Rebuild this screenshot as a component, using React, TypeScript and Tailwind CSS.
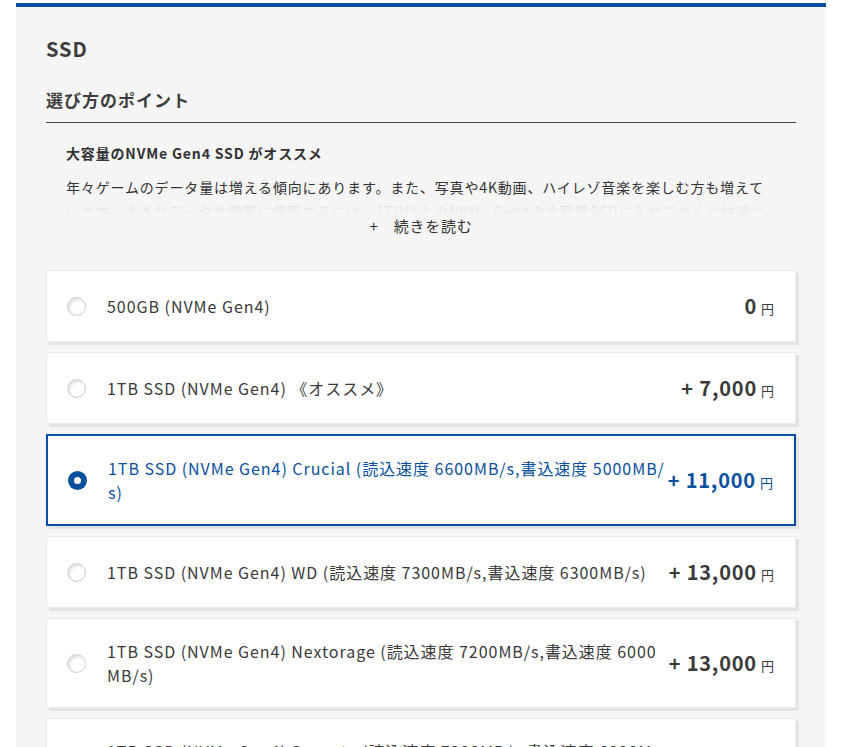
import { useState } from 'react';

interface Option {
    label: string;
    price: number;
}

const options: Option[] = [
    { label: '500GB (NVMe Gen4)', price: 0 },
    { label: '1TB SSD (NVMe Gen4) 《オススメ》', price: 7000 },
    { label: '1TB SSD (NVMe Gen4) Crucial (読込速度 6600MB/s,書込速度 5000MB/s)', price: 11000 },
    { label: '1TB SSD (NVMe Gen4) WD (読込速度 7300MB/s,書込速度 6300MB/s)', price: 13000 },
    { label: '1TB SSD (NVMe Gen4) Nextorage (読込速度 7200MB/s,書込速度 6000MB/s)', price: 13000 },
    { label: '1TB SSD (NVMe Gen4) Seagate (読込速度 7300MB/s,書込速度 6000MB/s)', price: 14000 },
];

function Radio({ checked }: { checked: boolean }) {
    if (checked) {
        return (
            <span className="w-[19px] h-[19px] rounded-full bg-[#0a4f9e] flex items-center justify-center shrink-0">
                <span className="w-[7px] h-[7px] rounded-full bg-white" />
            </span>
        );
    }
    return (
        <span className="w-[19px] h-[19px] rounded-full border border-[#cfcfcf] bg-white shadow-[inset_2px_2px_3px_rgba(0,0,0,0.12)] shrink-0" />
    );
}

export default function App() {
    const [selected, setSelected] = useState(2);

    return (
        <div className="min-h-screen bg-white pt-[3px] overflow-hidden" style={{ fontFamily: '"Noto Sans CJK JP", "Noto Sans", sans-serif' }}>
            <div className="ml-4 w-[810px] bg-[#f5f5f5] border-t-4 border-[#0a4f9e] px-[30px] pb-10">
                <h2 className="pt-[28px] text-[20px] leading-[28px] font-bold text-[#3d3d3d] tracking-[0.05em]">SSD</h2>

                <h3 className="mt-[24px] text-[17px] leading-[26px] font-bold text-[#3d3d3d] tracking-[0.06em] pb-[9px] border-b border-[#444]">選び方のポイント</h3>

                <div className="px-5">
                    <p className="mt-[18px] text-[14px] leading-[24px] font-bold text-[#333] tracking-[0.06em]">大容量のNVMe Gen4 SSD がオススメ</p>
                    <div className="relative mt-[10px] h-[41px] overflow-hidden">
                        <p className="text-[14px] leading-[24px] text-[#333] tracking-[0.06em]">
                            年々ゲームのデータ量は増える傾向にあります。また、写真や4K動画、ハイレゾ音楽を楽しむ方も増えています。大きなデータを頻繁に使用するには、1TB以上のNVMe Gen4の大容量SSDに入れておくと快適に使用できます。
                        </p>
                        <div className="absolute inset-x-0 top-[22px] bottom-0 bg-gradient-to-b from-[#f5f5f5]/80 to-[#f5f5f5]" />
                    </div>
                    <div className="flex justify-center">
                        <button className="text-[15px] leading-[20px] text-[#333] tracking-[0.05em] flex items-center gap-[15px]">
                            <span>+</span>
                            <span>続きを読む</span>
                        </button>
                    </div>
                </div>

                <div className="mt-[34px] flex flex-col gap-[10px]">
                    {options.map((opt, i) => {
                        const isSel = i === selected;
                        return (
                            <div
                                key={i}
                                onClick={() => setSelected(i)}
                                className={`min-h-[72px] flex items-center bg-white pl-5 pr-[21px] py-[20px] shadow-[3px_3px_0_0_#e3e3e3] cursor-pointer ${isSel ? 'border-2 border-[#0a4f9e] text-[#0a4f9e]' : 'border border-[#ebebeb] text-[#3a3a3a]'}`}
                            >
                                <Radio checked={isSel} />
                                <div className="flex-1 ml-[21px] text-[16px] leading-[24px] tracking-[0.06em] break-all">{opt.label}</div>
                                <div className="shrink-0 pl-[2px] flex items-baseline">
                                    <span className="text-[20px] font-bold tracking-[0.04em]">{opt.price === 0 ? '0' : `+ ${opt.price.toLocaleString()}`}</span>
                                    <span className="text-[13px] ml-[4px]">円</span>
                                </div>
                            </div>
                        );
                    })}
                </div>
            </div>
        </div>
    );
}
